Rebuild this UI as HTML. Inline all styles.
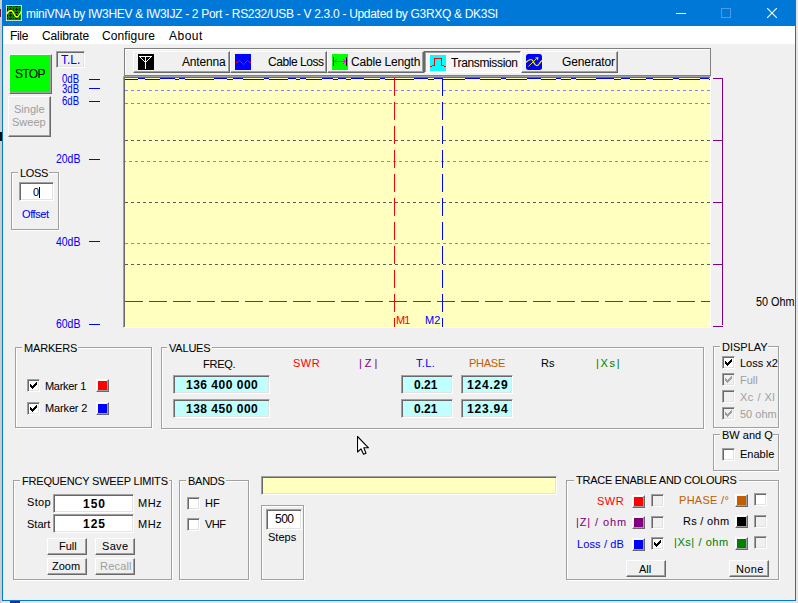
<!DOCTYPE html><html><head><meta charset="utf-8"><style>*{box-sizing:border-box}
html,body{margin:0;padding:0}
body{width:798px;height:603px;position:relative;overflow:hidden;background:#e6e6e6;font-family:"Liberation Sans",sans-serif;font-size:11px;color:#000}
.a{position:absolute}
.t{position:absolute;white-space:nowrap;line-height:13px;font-size:11px;-webkit-text-stroke:0.04px currentColor}
.u{position:absolute;white-space:nowrap;line-height:14px;font-size:12px;-webkit-text-stroke:0.04px currentColor}
.gb{position:absolute;border:1px solid #a0a0a0;box-shadow:inset 1px 1px 0 #fff,1px 1px 0 #fff}
.bg{position:absolute;background:#f0f0f0}
.btn{position:absolute;background:#f0f0f0;border-top:1px solid #fff;border-left:1px solid #fff;border-right:1px solid #696969;border-bottom:1px solid #696969;box-shadow:inset -1px -1px 0 #a0a0a0}
.sunk{position:absolute;border-top:1px solid #a0a0a0;border-left:1px solid #a0a0a0;border-right:1px solid #fff;border-bottom:1px solid #fff;box-shadow:inset 1px 1px 0 #696969,inset -1px -1px 0 #e3e3e3}
.cb{position:absolute;width:13px;height:13px;background:#fff;border-top:1px solid #a0a0a0;border-left:1px solid #a0a0a0;border-right:1px solid #fff;border-bottom:1px solid #fff;box-shadow:inset 1px 1px 0 #696969,inset -1px -1px 0 #e3e3e3}
.cbd{background:#f0f0f0}
.cb svg{position:absolute;left:2px;top:2px}
.sw{position:absolute;width:13px;height:13px;border-top:1px solid #fff;border-left:1px solid #fff;border-right:1px solid #696969;border-bottom:1px solid #696969;box-shadow:inset -1px -1px 0 #a0a0a0,inset 1px 1px 0 #f8f8f8}
.sw i{position:absolute;left:1px;top:1px;width:9px;height:9px}
.vb{position:absolute;background:#c0ffff;border-top:1px solid #a0a0a0;border-left:1px solid #a0a0a0;border-right:1px solid #fff;border-bottom:1px solid #fff;box-shadow:inset 1px 1px 0 #696969,inset -1px -1px 0 #e3e3e3}
.tb{position:absolute;top:51px;height:22px;background:#f0f0f0;border-top:1px solid #fff;border-left:1px solid #fff;border-right:1px solid #696969;border-bottom:1px solid #696969;box-shadow:inset -1px -1px 0 #a0a0a0}
</style></head><body>
<div class="a" style="left:0px;top:0px;width:2px;height:603px;background:#d0cccc"></div>
<div class="a" style="left:0px;top:9px;width:1px;height:8px;background:#6a1a3a"></div>
<div class="a" style="left:0px;top:132px;width:2px;height:9px;background:#101010"></div>
<div class="a" style="left:10px;top:601px;width:10px;height:2px;background:#3a2080"></div>
<div class="a" style="left:2px;top:0;width:794px;height:601px;border:1px solid #0078d7;border-top:0;background:#f0f0f0"></div>
<div class="a" style="left:2px;top:0px;width:794px;height:26px;background:#0078d7"></div>
<svg class="a" style="left:6px;top:5px" width="16" height="16" viewBox="0 0 16 16" shape-rendering="crispEdges">
<rect width="16" height="16" fill="#c8d8c8"/><rect x="0" y="0" width="1" height="1" fill="#fff"/><rect x="15" y="0" width="1" height="1" fill="#fff"/><rect x="0" y="15" width="1" height="1" fill="#fff"/><rect x="15" y="15" width="1" height="1" fill="#fff"/><rect x="1" y="1" width="14" height="14" fill="#008c00"/>
<path fill="#001800" d="M1 1h1v1h-1zM1 3h1v1h-1zM1 4h1v1h-1zM1 5h1v1h-1zM1 7h1v1h-1zM1 9h1v1h-1zM1 10h1v1h-1zM1 11h1v1h-1zM1 13h1v1h-1zM3 1h1v1h-1zM3 4h1v1h-1zM3 7h1v1h-1zM3 10h1v1h-1zM3 13h1v1h-1zM4 1h1v1h-1zM4 3h1v1h-1zM4 4h1v1h-1zM4 5h1v1h-1zM4 7h1v1h-1zM4 9h1v1h-1zM4 10h1v1h-1zM4 11h1v1h-1zM4 13h1v1h-1zM5 1h1v1h-1zM5 4h1v1h-1zM5 7h1v1h-1zM5 10h1v1h-1zM5 13h1v1h-1zM7 1h1v1h-1zM7 3h1v1h-1zM7 4h1v1h-1zM7 5h1v1h-1zM7 7h1v1h-1zM7 9h1v1h-1zM7 10h1v1h-1zM7 11h1v1h-1zM7 13h1v1h-1zM9 1h1v1h-1zM9 4h1v1h-1zM9 7h1v1h-1zM9 10h1v1h-1zM9 13h1v1h-1zM10 1h1v1h-1zM10 3h1v1h-1zM10 4h1v1h-1zM10 5h1v1h-1zM10 7h1v1h-1zM10 9h1v1h-1zM10 10h1v1h-1zM10 11h1v1h-1zM10 13h1v1h-1zM11 1h1v1h-1zM11 4h1v1h-1zM11 7h1v1h-1zM11 10h1v1h-1zM11 13h1v1h-1zM13 1h1v1h-1zM13 3h1v1h-1zM13 4h1v1h-1zM13 5h1v1h-1zM13 7h1v1h-1zM13 9h1v1h-1zM13 10h1v1h-1zM13 11h1v1h-1zM13 13h1v1h-1z"/>
<path d="M0.5 9.5C2 7,3 5.5,5 5.5S7 7,8 9S10 12,11 12S14 9,15.5 6" stroke="#ffff00" stroke-width="1.4" fill="none" shape-rendering="auto"/></svg>
<div class="u" style="left:26px;top:7px;letter-spacing:-0.305px;color:#fff;-webkit-text-stroke:0">miniVNA by IW3HEV &amp; IW3IJZ - 2 Port - RS232/USB - V 2.3.0 - Updated by G3RXQ &amp; DK3SI</div>
<div class="a" style="left:676px;top:13px;width:10px;height:1px;background:#fff"></div>
<div class="a" style="left:721px;top:8px;width:10px;height:10px;border:1px solid #4d9be0"></div>
<svg class="a" style="left:767px;top:8px" width="10" height="10" viewBox="0 0 10 10"><path d="M0 0L10 10M10 0L0 10" stroke="#fff" stroke-width="1.1"/></svg>
<div class="a" style="left:3px;top:26px;width:792px;height:18px;background:#fff"></div>
<div class="u" style="left:10px;top:29px;letter-spacing:-0.33px">File</div>
<div class="u" style="left:42px;top:29px;letter-spacing:-0.12px">Calibrate</div>
<div class="u" style="left:102px;top:29px;letter-spacing:0.12px">Configure</div>
<div class="u" style="left:169px;top:29px;letter-spacing:0.5px">About</div>
<div class="btn" style="left:9px;top:54px;width:43px;height:40px;background:#00ff00"></div>
<div class="u" style="left:15px;top:67px;letter-spacing:-0.67px">STOP</div>
<div class="btn" style="left:8px;top:96px;width:43px;height:41px"></div>
<div class="t" style="left:14px;top:103px;color:#a0a0a0">Single</div>
<div class="t" style="left:12px;top:116px;color:#a0a0a0">Sweep</div>
<div class="sunk" style="left:56px;top:51px;width:29px;height:17px;background:#f0f0f0"></div>
<div class="u" style="left:61px;top:53px;color:#0000ff">T.L.</div>
<div class="gb" style="left:11px;top:172px;width:48px;height:58px"></div>
<div class="a" style="left:18px;top:167px;width:31px;height:13px;background:#f0f0f0"></div>
<div class="t" style="left:20px;top:167px;letter-spacing:-0.33px">LOSS</div>
<div class="sunk" style="left:19px;top:182px;width:35px;height:19px;background:#fff"></div>
<div class="t" style="left:33px;top:186px">0</div>
<div class="a" style="left:39px;top:187px;width:1px;height:11px;background:#000"></div>
<div class="t" style="left:22px;top:208px;letter-spacing:-0.4px;color:#0000ff">Offset</div>
<div class="u" style="left:62px;top:72px;color:#0000ff;transform:scaleX(0.8);transform-origin:0 0">0dB</div>
<div class="u" style="left:62px;top:82px;color:#0000ff;transform:scaleX(0.8);transform-origin:0 0">3dB</div>
<div class="u" style="left:62px;top:94px;color:#0000ff;transform:scaleX(0.8);transform-origin:0 0">6dB</div>
<div class="u" style="left:56px;top:152px;color:#0000ff;transform:scaleX(0.87);transform-origin:0 0">20dB</div>
<div class="u" style="left:56px;top:235px;color:#0000ff;transform:scaleX(0.87);transform-origin:0 0">40dB</div>
<div class="u" style="left:56px;top:317px;color:#0000ff;transform:scaleX(0.87);transform-origin:0 0">60dB</div>
<div class="a" style="left:89px;top:79px;width:11px;height:1px;background:#0000ff"></div>
<div class="a" style="left:89px;top:88px;width:11px;height:1px;background:#0000ff"></div>
<div class="a" style="left:89px;top:101px;width:11px;height:1px;background:#0000ff"></div>
<div class="a" style="left:89px;top:159px;width:11px;height:1px;background:#0000ff"></div>
<div class="a" style="left:89px;top:241px;width:11px;height:1px;background:#0000ff"></div>
<div class="a" style="left:89px;top:324px;width:11px;height:1px;background:#0000ff"></div>
<div class="a" style="left:124px;top:48px;width:587px;height:28px;border:1px solid #808080;box-shadow:inset 1px 1px 0 #fff"></div>
<div class="tb" style="left:133px;width:97px"></div>
<div class="tb" style="left:230px;width:97px"></div>
<div class="tb" style="left:327px;width:97px"></div>
<div class="tb" style="left:521px;width:97px"></div>
<div class="a" style="left:424px;top:51px;width:97px;height:22px;background:#f6f6f6;border-top:1px solid #696969;border-left:1px solid #696969;border-right:1px solid #fff;border-bottom:1px solid #fff;box-shadow:inset 1px 1px 0 #a0a0a0"></div>
<svg class="a" style="left:138px;top:54px" width="16" height="16" viewBox="0 0 16 16" shape-rendering="crispEdges"><rect width="16" height="16" fill="#000"/><g fill="#fff"><rect x="1" y="2" width="13" height="1"/><rect x="7" y="2" width="1" height="13"/><rect x="2" y="3" width="1" height="1"/><rect x="3" y="4" width="1" height="1"/><rect x="4" y="5" width="1" height="1"/><rect x="5" y="6" width="1" height="1"/><rect x="6" y="7" width="1" height="1"/><rect x="12" y="3" width="1" height="1"/><rect x="11" y="4" width="1" height="1"/><rect x="10" y="5" width="1" height="1"/><rect x="9" y="6" width="1" height="1"/><rect x="8" y="7" width="1" height="1"/></g></svg>
<div class="u" style="left:182px;top:55px;letter-spacing:-0.17px">Antenna</div>
<svg class="a" style="left:235px;top:54px" width="16" height="16" viewBox="0 0 16 16" shape-rendering="crispEdges"><rect width="16" height="16" fill="#0000ff"/><g fill="#ff0000"><rect x="1" y="8" width="2" height="1"/><rect x="3" y="7" width="1" height="1"/><rect x="4" y="6" width="1" height="1"/><rect x="5" y="7" width="1" height="1"/><rect x="6" y="8" width="1" height="1"/><rect x="7" y="9" width="1" height="1"/><rect x="8" y="10" width="1" height="1"/><rect x="9" y="9" width="1" height="1"/><rect x="10" y="8" width="1" height="1"/><rect x="11" y="7" width="1" height="1"/><rect x="12" y="6" width="1" height="1"/><rect x="13" y="7" width="1" height="1"/><rect x="14" y="8" width="2" height="1"/></g></svg>
<div class="u" style="left:268px;top:55px;letter-spacing:-0.44px">Cable Loss</div>
<svg class="a" style="left:332px;top:54px" width="16" height="16" viewBox="0 0 16 16" shape-rendering="crispEdges"><rect width="16" height="16" fill="#00ff00"/><g fill="#000"><rect x="1" y="3" width="1" height="9"/><rect x="14" y="3" width="1" height="9"/></g><g fill="#ff00ff"><rect x="2" y="7" width="12" height="1"/><rect x="3" y="6" width="1" height="3"/><rect x="4" y="5" width="1" height="1"/><rect x="4" y="9" width="1" height="1"/><rect x="12" y="6" width="1" height="3"/><rect x="11" y="5" width="1" height="1"/><rect x="11" y="9" width="1" height="1"/></g></svg>
<div class="u" style="left:351px;top:55px;letter-spacing:-0.18px">Cable Length</div>
<svg class="a" style="left:430px;top:55px" width="16" height="16" viewBox="0 0 16 16" shape-rendering="crispEdges"><rect width="16" height="16" fill="#00ffff"/><g fill="#ff0000"><rect x="0" y="11" width="2" height="1"/><rect x="2" y="10" width="2" height="1"/><rect x="4" y="3" width="1" height="8"/><rect x="4" y="3" width="8" height="1"/><rect x="11" y="3" width="1" height="8"/><rect x="12" y="10" width="2" height="1"/><rect x="14" y="11" width="2" height="1"/></g></svg>
<div class="u" style="left:451px;top:56px;letter-spacing:-0.36px">Transmission</div>
<svg class="a" style="left:526px;top:54px" width="16" height="16" viewBox="0 0 16 16"><rect width="16" height="16" rx="2.5" fill="#0000ff"/><path d="M0 8.5C2 6,3 5.5,5 5.5S7 7,8 9S10 12,11.5 11.5S14 8,16 6.5" stroke="#ffff00" stroke-width="1.2" fill="none"/><path d="M2.5 12.5L10 5" stroke="#e0e000" stroke-width="1" fill="none"/><path d="M9 3.5L12.5 3L12 6.5Z" fill="#d8d820"/></svg>
<div class="u" style="left:562px;top:55px;letter-spacing:-0.12px">Generator</div>
<div class="a" style="left:123px;top:76px;width:588px;height:252px;border-top:1px solid #a0a0a0;border-left:1px solid #a0a0a0;border-right:1px solid #fff;border-bottom:1px solid #fff;box-shadow:inset 1px 1px 0 #696969;background:#ffffc0"></div>
<svg class="a" style="left:125px;top:78px" width="585" height="249" viewBox="0 0 585 249" shape-rendering="crispEdges"><g stroke-width="1" fill="none"><path d="M0 12.5H585M0 25.5H585M0 165.5H585" stroke="#8080ff" stroke-dasharray="3 3"/><path d="M0 83.5H585" stroke="#8080ff" stroke-dasharray="3 3" stroke-dashoffset="2"/><path d="M0 62.5H585M0 124.5H585M0 186.5H585" stroke="#5c5c5c" stroke-dasharray="3 3"/><path d="M0 223.5H585" stroke="#ff0000" stroke-dasharray="18 6"/><path d="M269.5 0V249" stroke="#ff0000" stroke-dasharray="18 6"/><path d="M317.5 0V249" stroke="#0000ff" stroke-dasharray="18 6"/><path d="M0 1.5H13M13 0.5H20M20 1.5H35M35 0.5H50M50 1.5H54M54 0.5H60M60 1.5H89M89 0.5H102M102 1.5H108M108 0.5H118M118 1.5H139M139 0.5H144M144 1.5H163M163 0.5H171M171 1.5H175M175 0.5H181M181 1.5H197M197 0.5H208M208 1.5H213M213 0.5H221M221 1.5H226M226 0.5H239M239 1.5H255M255 0.5H260M260 1.5H289M289 0.5H303M303 1.5H309M309 0.5H317M317 1.5H340M340 0.5H355M355 1.5H376M376 0.5H381M381 1.5H402M402 0.5H416M416 1.5H431M431 0.5H436M436 1.5H446M446 0.5H451M451 1.5H471M471 0.5H489M489 1.5H496M496 0.5H505M505 1.5H521M521 0.5H528M528 1.5H548M548 0.5H554M554 1.5H575M575 0.5H584M584 1.5H585" stroke="#0000ff"/></g></svg>
<div class="t" style="left:396px;top:314px;letter-spacing:-1px;color:#ff0000">M1</div>
<div class="t" style="left:425px;top:314px;color:#0000ff">M2</div>
<div class="a" style="left:722px;top:78px;width:1px;height:247px;background:#800080"></div>
<div class="a" style="left:713px;top:78px;width:10px;height:1px;background:#800080"></div>
<div class="a" style="left:713px;top:140px;width:10px;height:1px;background:#800080"></div>
<div class="a" style="left:713px;top:202px;width:10px;height:1px;background:#800080"></div>
<div class="a" style="left:713px;top:264px;width:10px;height:1px;background:#800080"></div>
<div class="a" style="left:713px;top:326px;width:10px;height:1px;background:#800080"></div>
<div class="u" style="left:756px;top:295px;transform:scaleX(0.9);transform-origin:0 0">50 Ohm</div>
<div class="gb" style="left:15px;top:347px;width:137px;height:81px"></div>
<div class="a" style="left:22px;top:342px;width:56px;height:13px;background:#f0f0f0"></div>
<div class="t" style="left:24px;top:342px;letter-spacing:-0.17px">MARKERS</div>
<div class="cb" style="left:27px;top:379px"><svg width="9" height="9" viewBox="0 0 9 9" shape-rendering="crispEdges"><path fill="#000" d="M0 2h1v3h-1zM1 3h1v3h-1zM2 4h1v3h-1zM3 3h1v3h-1zM4 2h1v3h-1zM5 1h1v3h-1zM6 0h1v3h-1z"/></svg></div>
<div class="cb" style="left:27px;top:402px"><svg width="9" height="9" viewBox="0 0 9 9" shape-rendering="crispEdges"><path fill="#000" d="M0 2h1v3h-1zM1 3h1v3h-1zM2 4h1v3h-1zM3 3h1v3h-1zM4 2h1v3h-1zM5 1h1v3h-1zM6 0h1v3h-1z"/></svg></div>
<div class="t" style="left:45px;top:380px;letter-spacing:-0.29px">Marker 1</div>
<div class="t" style="left:45px;top:402px;letter-spacing:-0.14px">Marker 2</div>
<div class="sw" style="left:96px;top:379px"><i style="background:#ff0000"></i></div>
<div class="sw" style="left:96px;top:402px"><i style="background:#0000ff"></i></div>
<div class="gb" style="left:161px;top:347px;width:543px;height:82px"></div>
<div class="a" style="left:167px;top:342px;width:45px;height:13px;background:#f0f0f0"></div>
<div class="t" style="left:169px;top:342px;letter-spacing:-0.2px">VALUES</div>
<div class="t" style="left:203px;top:358px;letter-spacing:-0.25px">FREQ.</div>
<div class="t" style="left:293px;top:357px;letter-spacing:0.5px;color:#ff0000">SWR</div>
<div class="t" style="left:359px;top:357px;letter-spacing:3px;color:#800080">|Z|</div>
<div class="t" style="left:416px;top:357px;letter-spacing:0.33px;color:#0000ff">T.L.</div>
<div class="t" style="left:469px;top:357px;letter-spacing:-0.25px;color:#c06000">PHASE</div>
<div class="t" style="left:541px;top:357px">Rs</div>
<div class="t" style="left:596px;top:357px;letter-spacing:1.67px;color:#008000">|Xs|</div>
<div class="vb" style="left:173px;top:375px;width:97px;height:19px"></div>
<div class="vb" style="left:173px;top:399px;width:97px;height:19px"></div>
<div class="vb" style="left:401px;top:375px;width:52px;height:19px"></div>
<div class="vb" style="left:401px;top:399px;width:52px;height:19px"></div>
<div class="vb" style="left:461px;top:375px;width:52px;height:19px"></div>
<div class="vb" style="left:461px;top:399px;width:52px;height:19px"></div>
<div class="u" style="left:186px;top:378px;letter-spacing:0.5px;font-weight:bold">136 400 000</div>
<div class="u" style="left:186px;top:402px;letter-spacing:0.5px;font-weight:bold">138 450 000</div>
<div class="u" style="left:414px;top:378px;font-weight:bold">0.21</div>
<div class="u" style="left:414px;top:402px;font-weight:bold">0.21</div>
<div class="u" style="left:467px;top:378px;letter-spacing:0.8px;font-weight:bold">124.29</div>
<div class="u" style="left:467px;top:402px;letter-spacing:0.8px;font-weight:bold">123.94</div>
<div class="gb" style="left:713px;top:346px;width:66px;height:82px"></div>
<div class="a" style="left:720px;top:341px;width:48px;height:13px;background:#f0f0f0"></div>
<div class="t" style="left:722px;top:341px">DISPLAY</div>
<div class="cb" style="left:722px;top:356px"><svg width="9" height="9" viewBox="0 0 9 9" shape-rendering="crispEdges"><path fill="#000" d="M0 2h1v3h-1zM1 3h1v3h-1zM2 4h1v3h-1zM3 3h1v3h-1zM4 2h1v3h-1zM5 1h1v3h-1zM6 0h1v3h-1z"/></svg></div>
<div class="t" style="left:740px;top:357px">Loss x2</div>
<div class="cb cbd" style="left:722px;top:373px"><svg width="9" height="9" viewBox="0 0 9 9" shape-rendering="crispEdges"><path fill="#a0a0a0" d="M0 2h1v3h-1zM1 3h1v3h-1zM2 4h1v3h-1zM3 3h1v3h-1zM4 2h1v3h-1zM5 1h1v3h-1zM6 0h1v3h-1z"/></svg></div>
<div class="t" style="left:740px;top:374px;color:#a0a0a0">Full</div>
<div class="cb cbd" style="left:722px;top:390px"></div>
<div class="t" style="left:740px;top:391px;letter-spacing:0.5px;color:#a0a0a0">Xc / Xl</div>
<div class="cb cbd" style="left:722px;top:407px"><svg width="9" height="9" viewBox="0 0 9 9" shape-rendering="crispEdges"><path fill="#a0a0a0" d="M0 2h1v3h-1zM1 3h1v3h-1zM2 4h1v3h-1zM3 3h1v3h-1zM4 2h1v3h-1zM5 1h1v3h-1zM6 0h1v3h-1z"/></svg></div>
<div class="t" style="left:740px;top:408px;color:#a0a0a0">50 ohm</div>
<div class="gb" style="left:713px;top:434px;width:66px;height:37px"></div>
<div class="a" style="left:720px;top:429px;width:53px;height:13px;background:#f0f0f0"></div>
<div class="t" style="left:722px;top:429px">BW and Q</div>
<div class="cb" style="left:722px;top:448px"></div>
<div class="t" style="left:740px;top:448px">Enable</div>
<svg class="a" style="left:357px;top:436px" width="12" height="20" viewBox="0 0 12 20"><path d="M0.5 0.5L0.5 16L4 12.8L6.5 18.3L9 17.3L6.8 11.8L11.5 11.8Z" fill="#fff" stroke="#000" stroke-width="1.1" stroke-linejoin="round"/></svg>
<div class="gb" style="left:13px;top:480px;width:159px;height:100px"></div>
<div class="a" style="left:20px;top:475px;width:149px;height:13px;background:#f0f0f0"></div>
<div class="t" style="left:22px;top:475px;letter-spacing:-0.19px">FREQUENCY SWEEP LIMITS</div>
<div class="t" style="left:27px;top:496px;letter-spacing:0.33px">Stop</div>
<div class="t" style="left:27px;top:518px">Start</div>
<div class="sunk" style="left:53px;top:494px;width:81px;height:19px;background:#fff"></div>
<div class="sunk" style="left:53px;top:514px;width:81px;height:19px;background:#fff"></div>
<div class="u" style="left:83px;top:497px;letter-spacing:1px;font-weight:bold">150</div>
<div class="u" style="left:83px;top:517px;letter-spacing:1px;font-weight:bold">125</div>
<div class="t" style="left:138px;top:497px;letter-spacing:0.5px">MHz</div>
<div class="t" style="left:138px;top:518px;letter-spacing:0.5px">MHz</div>
<div class="btn" style="left:47px;top:538px;width:40px;height:17px"></div>
<div class="t" style="left:59px;top:540px">Full</div>
<div class="btn" style="left:95px;top:538px;width:40px;height:17px"></div>
<div class="t" style="left:102px;top:540px;letter-spacing:0.33px">Save</div>
<div class="btn" style="left:47px;top:558px;width:40px;height:17px"></div>
<div class="t" style="left:52px;top:560px">Zoom</div>
<div class="btn" style="left:95px;top:558px;width:40px;height:17px"></div>
<div class="t" style="left:100px;top:560px;letter-spacing:0.2px;color:#a0a0a0">Recall</div>
<div class="gb" style="left:179px;top:480px;width:70px;height:100px"></div>
<div class="a" style="left:186px;top:475px;width:40px;height:13px;background:#f0f0f0"></div>
<div class="t" style="left:188px;top:475px;letter-spacing:-0.25px">BANDS</div>
<div class="cb" style="left:187px;top:497px"></div>
<div class="t" style="left:205px;top:497px">HF</div>
<div class="cb" style="left:187px;top:518px"></div>
<div class="t" style="left:205px;top:518px;letter-spacing:-0.5px">VHF</div>
<div class="sunk" style="left:261px;top:476px;width:296px;height:19px;background:#ffffc0"></div>
<div class="gb" style="left:261px;top:505px;width:43px;height:75px"></div>
<div class="sunk" style="left:266px;top:509px;width:36px;height:21px;background:#fff"></div>
<div class="u" style="left:275px;top:512px;letter-spacing:-0.5px">500</div>
<div class="t" style="left:268px;top:531px">Steps</div>
<div class="gb" style="left:566px;top:480px;width:213px;height:100px"></div>
<div class="a" style="left:574px;top:474px;width:165px;height:13px;background:#f0f0f0"></div>
<div class="t" style="left:576px;top:474px;letter-spacing:-0.26px">TRACE ENABLE AND COLOURS</div>
<div class="t" style="left:597px;top:495px;letter-spacing:0.5px;color:#ff0000">SWR</div>
<div class="t" style="left:576px;top:516px;letter-spacing:0.88px;color:#800080">|Z| / ohm</div>
<div class="t" style="left:577px;top:538px;letter-spacing:0.12px;color:#0000ff">Loss / dB</div>
<div class="sw" style="left:632px;top:495px"><i style="background:#ff0000"></i></div>
<div class="sw" style="left:632px;top:516px"><i style="background:#800080"></i></div>
<div class="sw" style="left:632px;top:538px"><i style="background:#0000ff"></i></div>
<div class="cb cbd" style="left:651px;top:494px"></div>
<div class="cb cbd" style="left:651px;top:516px"></div>
<div class="cb" style="left:651px;top:537px"><svg width="9" height="9" viewBox="0 0 9 9" shape-rendering="crispEdges"><path fill="#000" d="M0 2h1v3h-1zM1 3h1v3h-1zM2 4h1v3h-1zM3 3h1v3h-1zM4 2h1v3h-1zM5 1h1v3h-1zM6 0h1v3h-1z"/></svg></div>
<div class="t" style="left:679px;top:494px;letter-spacing:0.29px;color:#c06000">PHASE /°</div>
<div class="t" style="left:683px;top:515px;letter-spacing:0.29px">Rs / ohm</div>
<div class="t" style="left:674px;top:536px;letter-spacing:0.56px;color:#008000">|Xs| / ohm</div>
<div class="sw" style="left:735px;top:494px"><i style="background:#c06000"></i></div>
<div class="sw" style="left:735px;top:515px"><i style="background:#000"></i></div>
<div class="sw" style="left:735px;top:537px"><i style="background:#008000"></i></div>
<div class="cb" style="left:754px;top:493px"></div>
<div class="cb cbd" style="left:754px;top:515px"></div>
<div class="cb cbd" style="left:754px;top:536px"></div>
<div class="btn" style="left:626px;top:560px;width:40px;height:17px"></div>
<div class="t" style="left:639px;top:563px">All</div>
<div class="btn" style="left:729px;top:560px;width:40px;height:17px"></div>
<div class="t" style="left:736px;top:563px;letter-spacing:0.33px">None</div>
</body></html>
